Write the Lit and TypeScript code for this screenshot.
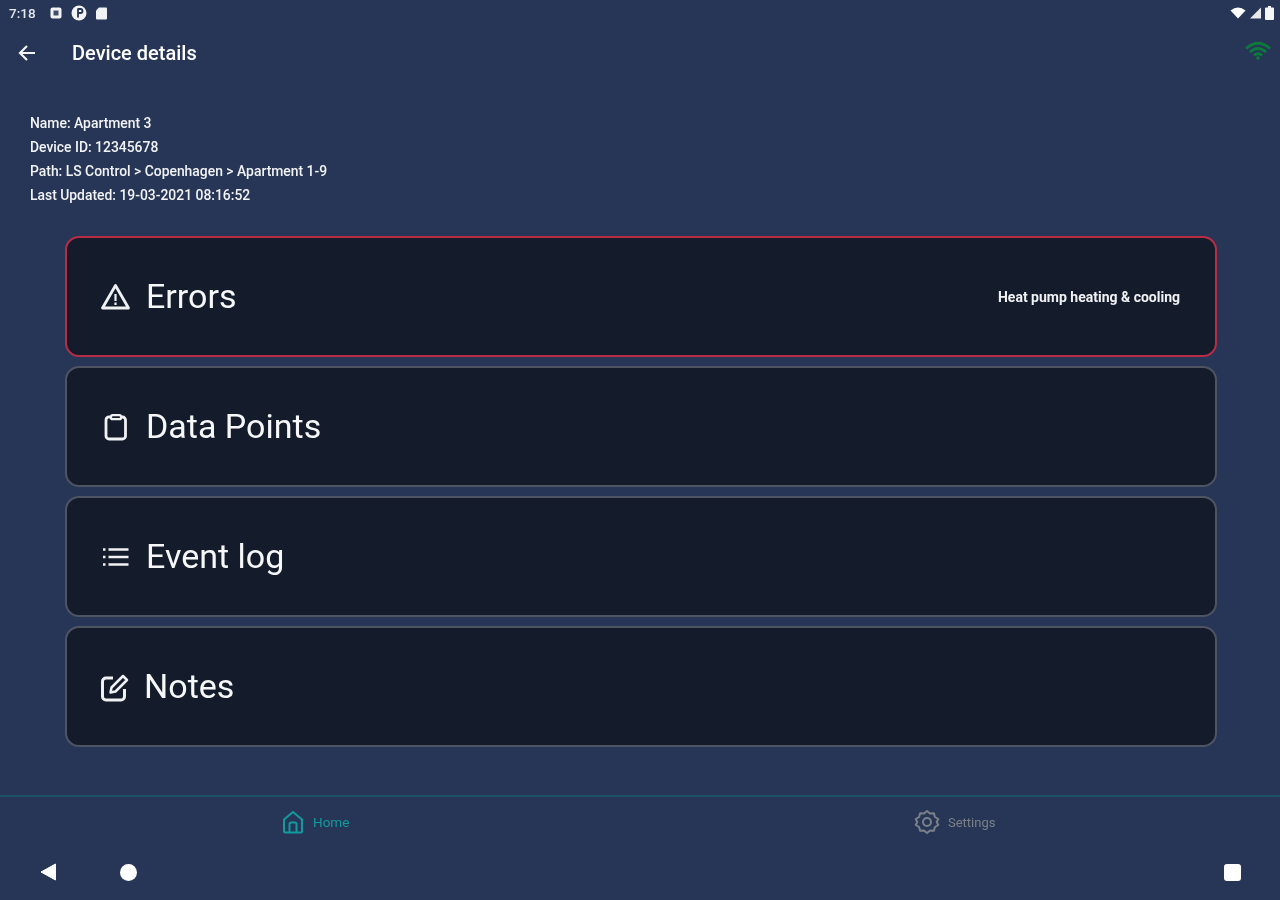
import { LitElement, html, css, svg } from "lit";
import { customElement } from "lit/decorators.js";

const rows = [
  { label: "Errors", cls: "error", note: "Heat pump heating & cooling", icon: svg`<path d="M14.500 3.500 L27.500 26 H1.500 Z" fill="none" stroke="currentColor" stroke-width="2.800" stroke-linejoin="round"/><path d="M14.500 12v7M14.500 20.500v2.500" stroke="currentColor" stroke-width="2.200"/>` },
  { label: "Data Points", cls: "", note: "", icon: svg`<path d="M10 5H8.500A3 3 0 0 0 5 8v16a3 3 0 0 0 3 3h13.500a3 3 0 0 0 3-3V8a3 3 0 0 0-3-3H20" fill="none" stroke="currentColor" stroke-width="2.800"/><rect x="10" y="3.200" width="10" height="4" rx="1.500" fill="none" stroke="currentColor" stroke-width="2.200"/>` },
  { label: "Event log", cls: "", note: "", icon: svg`<path d="M7.500 7.500H27.500M7.500 15H27.500M7.500 22.500H27.500" stroke="currentColor" stroke-width="2.500"/><path d="M2 7.500H4.500M2 15H4.500M2 22.500H4.500" stroke="currentColor" stroke-width="2.500"/>` },
  { label: "Notes", cls: "notes", note: "", icon: svg`<path d="M14 6H7a3.500 3.500 0 0 0-3.500 3.500v15A3.500 3.500 0 0 0 7 28h15a3.500 3.500 0 0 0 3.500-3.500V17" fill="none" stroke="currentColor" stroke-width="3"/><path d="M11.500 20.500l1-5L24 4l4 4-11.500 11.500z" fill="none" stroke="currentColor" stroke-width="2.500" stroke-linejoin="round"/>` },
];

@customElement("app-root")
export class AppRoot extends LitElement {
  static styles = css`
    :host { display: block; width: 1280px; height: 900px; overflow: hidden; background: #273656; color: #fff; font-family: Roboto, "Liberation Sans", sans-serif; }
    .page { filter: blur(0.5px); }
    .status { height: 26px; padding: 0 6px 0 9px; display: flex; align-items: center; gap: 9px; font-size: 13.500px; font-weight: 500; color: #e4e7ec; }
    .status .time { margin-right: 5px; }
    .status svg { display: block; }
    .spacer { flex: 1; }
    .status .right { display: flex; align-items: center; gap: 3px; }
    .toolbar { height: 54px; display: flex; align-items: center; padding: 0 0 0 17px; font-size: 20px; font-weight: 500; box-sizing: border-box; }
    .toolbar .back { width: 55px; display: flex; }
    .toolbar .wifi { margin-left: auto; margin-right: 9px; margin-top: -5px; }
    .info { padding: 31px 0 0 30px; font-size: 13.900px; font-weight: 500; line-height: 24px; color: #f2f3f5; height: 126px; box-sizing: border-box; }
    .cards { display: flex; flex-direction: column; gap: 9px; margin: 30px 63px 0 65px; }
    .card { height: 121px; box-sizing: border-box; border: 2px solid #4e5462; border-radius: 14px; background: #141b2b; display: flex; align-items: center; padding: 0 35px 0 34px; }
    .card.error { border-color: #b82d45; }
    .card svg { width: 30px; height: 30px; flex: none; color: #f0f1f3; }
    .card .label { margin-left: 15px; padding-bottom: 1px; font-size: 34px; color: #f6f7f8; }
    .card.notes svg { margin-left: -2px; }
    .card.notes .label { margin-left: 15px; }
    .card .note { margin-left: auto; font-size: 14px; font-weight: 700; color: #f0f1f3; }
    .tabs { margin-top: 48px; border-top: 2px solid #1e5266; height: 57px; display: grid; grid-template-columns: 632px 1fr; box-sizing: border-box; }
    .tab { display: flex; align-items: center; height: 50px; }
    .tab svg { display: block; flex: none; }
    .tab.home { padding-left: 281px; color: #139a9f; gap: 8px; font-size: 13.500px; }
    .tab.settings { padding-left: 282px; color: #7b8088; gap: 8px; font-size: 13px; }
    .nav { display: flex; align-items: center; height: 40px; padding: 0 39px 0 39px; }
    .nav .dot { width: 17px; height: 17px; border-radius: 50%; background: #fff; margin-left: 63px; }
    .nav .square { width: 17px; height: 17px; border-radius: 3px; background: #fff; margin-left: auto; }
  `;
  render() {
    return html`
    <div class="page">
      <div class="status">
        <span class="time">7:18</span>
        <svg width="12" height="12" viewBox="0 0 12 12"><rect x="0.500" y="0.500" width="11" height="11" rx="2" fill="#f2f3f5"/><rect x="3.500" y="3.500" width="5" height="5" fill="#44506b"/></svg>
        <svg width="16" height="16" viewBox="0 0 16 16"><circle cx="8" cy="8" r="7.500" fill="#f2f3f5"/><path d="M7 3.500v9M7 4h2.500a2 2 0 0 1 0 4H7" fill="none" stroke="#273656" stroke-width="1.800"/></svg>
        <svg width="11" height="13" viewBox="0 0 11 13"><path d="M3 0.500H10a1 1 0 0 1 1 1v10a1 1 0 0 1-1 1H1a1 1 0 0 1-1-1V3.500z" fill="#f2f3f5"/></svg>
        <span class="spacer"></span>
        <span class="right">
          <svg width="16" height="12" viewBox="0 0 16 12"><path d="M0.500 3.500Q8-2.500 15.500 3.500L8 11.500z" fill="#fff"/></svg>
          <svg width="13" height="12" viewBox="0 0 13 12"><path d="M12 0.500V11.500H1z" fill="#e8e9ec"/></svg>
          <svg width="9" height="14" viewBox="0 0 9 14"><path d="M3 0h3v1.500h2a1 1 0 0 1 1 1V13a1 1 0 0 1-1 1H1a1 1 0 0 1-1-1V2.500a1 1 0 0 1 1-1h2z" fill="#f4f5f6"/></svg>
        </span>
      </div>
      <div class="toolbar">
        <span class="back"><svg width="20" height="20" viewBox="0 0 20 20"><path d="M18 10H3.500M10 3l-7 7 7 7" fill="none" stroke="#f2f3f5" stroke-width="2.200"/></svg></span>
        <span>Device details</span>
        <svg class="wifi" width="26" height="20" viewBox="0 0 26 20"><path d="M1 7.500Q13-3 25 7.500M5 11Q13 4 21 11M9 14.500Q13 11 17 14.500" fill="none" stroke="#0c7a3c" stroke-width="2.800"/><circle cx="13" cy="17" r="1.800" fill="#0c7a3c"/></svg>
      </div>
      <div class="info">
        <div>Name: Apartment 3</div>
        <div>Device ID: 12345678</div>
        <div>Path: LS Control &gt; Copenhagen &gt; Apartment 1-9</div>
        <div>Last Updated: 19-03-2021 08:16:52</div>
      </div>
      <div class="cards">
        ${rows.map(r => html`
          <div class="card ${r.cls}">
            <svg viewBox="0 0 30 30">${r.icon}</svg>
            <span class="label">${r.label}</span>
            ${r.note ? html`<span class="note">${r.note}</span>` : ""}
          </div>`)}
      </div>
      <div class="tabs">
        <div class="tab home">
          <svg width="24" height="24" viewBox="0 0 24 24"><path d="M3 9.500L12 2l9 7.500V21a1.500 1.500 0 0 1-1.500 1.500h-15A1.500 1.500 0 0 1 3 21z" fill="none" stroke="currentColor" stroke-width="2"/><path d="M8.500 22v-8a1.500 1.500 0 0 1 1.500-1.500h4a1.500 1.500 0 0 1 1.500 1.500v8" fill="none" stroke="currentColor" stroke-width="2"/></svg>
          <span>Home</span>
        </div>
        <div class="tab settings">
          <svg width="26" height="26" viewBox="0 0 26 26"><path d="M13 2l3 2.600 3.900-.4 1 3.800 3.400 2-1.600 3 1.600 3-3.400 2-1 3.800-3.900-.4-3 2.600-3-2.600-3.900.4-1-3.800-3.400-2 1.600-3-1.600-3 3.400-2 1-3.800 3.900.4z" fill="none" stroke="currentColor" stroke-width="2" stroke-linejoin="round"/><circle cx="13" cy="13" r="4" fill="none" stroke="currentColor" stroke-width="2"/></svg>
          <span>Settings</span>
        </div>
      </div>
      <div class="nav">
        <svg width="18" height="20" viewBox="0 0 18 20"><path d="M16.500 2V18L2 10z" fill="#fff" stroke="#fff" stroke-linejoin="round"/></svg>
        <span class="dot"></span>
        <span class="square"></span>
      </div>
    </div>
    `;
  }
}
